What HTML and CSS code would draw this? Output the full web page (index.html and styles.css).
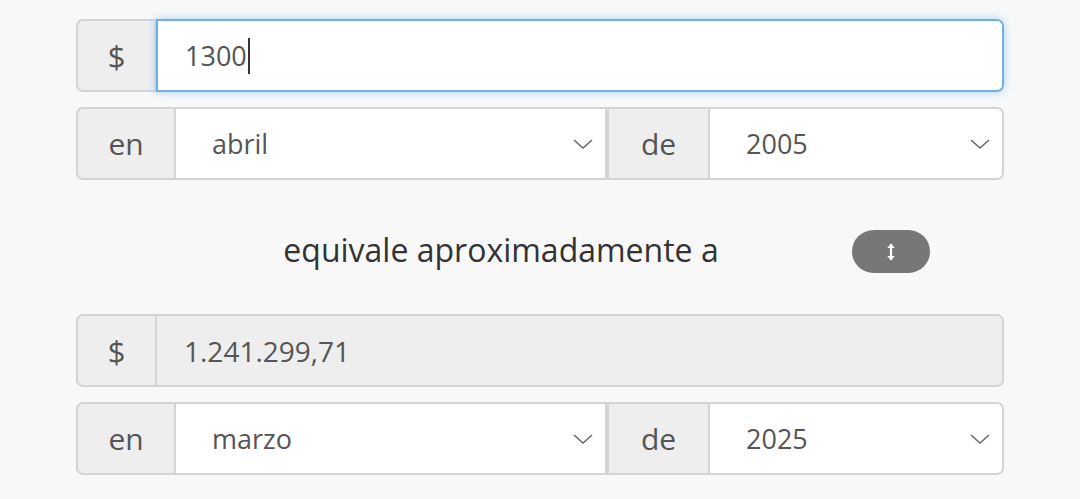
FILE: index.html
```html
<!DOCTYPE html>
<html lang="es">
<head>
<meta charset="utf-8">
<title>Conversor</title>
<link rel="stylesheet" href="styles.css">
</head>
<body>
<main class="form">
  <div class="row">
    <div class="addon addon-cur">$</div>
    <div class="field field-input focus"><span class="value">1300</span><span class="caret"></span></div>
  </div>
  <div class="row">
    <div class="group group-month">
      <div class="addon addon-en">en</div>
      <div class="field field-select"><span class="value">abril</span>
        <svg class="chev" viewBox="0 0 20 10" width="20" height="10"><path d="M1 1 L10 9 L19 1" fill="none" stroke="#666" stroke-width="1.5"/></svg>
      </div>
    </div>
    <div class="group group-year">
      <div class="addon addon-de">de</div>
      <div class="field field-select last"><span class="value">2005</span>
        <svg class="chev" viewBox="0 0 20 10" width="20" height="10"><path d="M1 1 L10 9 L19 1" fill="none" stroke="#666" stroke-width="1.5"/></svg>
      </div>
    </div>
  </div>
  <div class="middle">
    <div class="equiv">equivale aproximadamente a</div>
    <button class="swap" type="button" aria-label="invertir">
      <svg viewBox="0 0 10 20" width="10" height="20"><path d="M5 2 V18" stroke="#fff" stroke-width="2.2" fill="none"/><path d="M1.2 6 L5 1.5 L8.8 6 Z" fill="#fff"/><path d="M1.2 14 L5 18.5 L8.8 14 Z" fill="#fff"/></svg>
    </button>
  </div>
  <div class="row">
    <div class="addon addon-cur">$</div>
    <div class="field field-input readonly"><span class="value">1.241.299,71</span></div>
  </div>
  <div class="row">
    <div class="group group-month">
      <div class="addon addon-en">en</div>
      <div class="field field-select"><span class="value">marzo</span>
        <svg class="chev" viewBox="0 0 20 10" width="20" height="10"><path d="M1 1 L10 9 L19 1" fill="none" stroke="#666" stroke-width="1.5"/></svg>
      </div>
    </div>
    <div class="group group-year">
      <div class="addon addon-de">de</div>
      <div class="field field-select last"><span class="value">2025</span>
        <svg class="chev" viewBox="0 0 20 10" width="20" height="10"><path d="M1 1 L10 9 L19 1" fill="none" stroke="#666" stroke-width="1.5"/></svg>
      </div>
    </div>
  </div>
</main>
</body>
</html>
```

FILE: styles.css
```css
* { box-sizing: border-box; }
html, body { margin: 0; padding: 0; }
body {
  background: #f8f8f8;
  font-family: "Open Sans", "Noto Sans", "DejaVu Sans", sans-serif;
  color: #555;
  width: 1080px;
  height: 499px;
  overflow: hidden;
}
.form {
  width: 928px;
  margin: 0 auto;
  padding-top: 19px;
  display: flex;
  flex-direction: column;
}
.row {
  display: flex;
  height: 73px;
  margin-bottom: 15px;
}
.group { display: flex; height: 100%; }
.group-month { width: 531px; }
.group-year { flex: 1; }
.addon {
  background: #eeeeee;
  border: 2px solid #d4d4d4;
  display: flex;
  align-items: center;
  justify-content: center;
  font-size: 30px;
  color: #555;
  flex: none;
}
.addon-cur { width: 80px; border-radius: 7px 0 0 7px; border-right-width: 1px; font-size: 31px; }
.addon-en { width: 99px; border-radius: 7px 0 0 7px; border-right-width: 1px; }
.addon-de { width: 102px; border-left-width: 2px; border-right-width: 1px; }
.field {
  flex: 1;
  background: #fff;
  border: 2px solid #d4d4d4;
  border-left-width: 1px;
  display: flex;
  align-items: center;
  font-size: 27px;
  color: #555;
  position: relative;
}
.field-input { padding-left: 27px; border-radius: 0 7px 7px 0; }
.field-input.focus {
  border: 2px solid #72afe4;
  box-shadow: 0 0 9px rgba(102, 175, 233, 0.55);
}
.field-input.readonly { background: #eeeeee; font-size: 28px; }
.field-select { padding-left: 36px; padding-right: 12px; }
.field-select.last { border-radius: 0 7px 7px 0; }
.field-select .value { flex: 1; }
.chev { flex: none; }
.caret {
  display: inline-block;
  width: 2px;
  height: 36px;
  background: #333;
  margin-left: 1px;
}
.middle {
  height: 134px;
  margin-top: -15px;
  padding-top: 9px;
  display: flex;
  align-items: center;
}
.equiv {
  width: 776px;
  padding-left: 74px;
  text-align: center;
  font-size: 32px;
  color: #333;
  padding-bottom: 4px;
}
.swap {
  width: 78px;
  height: 43px;
  border-radius: 22px;
  background: #777;
  border: none;
  padding: 0;
  display: flex;
  align-items: center;
  justify-content: center;
}
```
